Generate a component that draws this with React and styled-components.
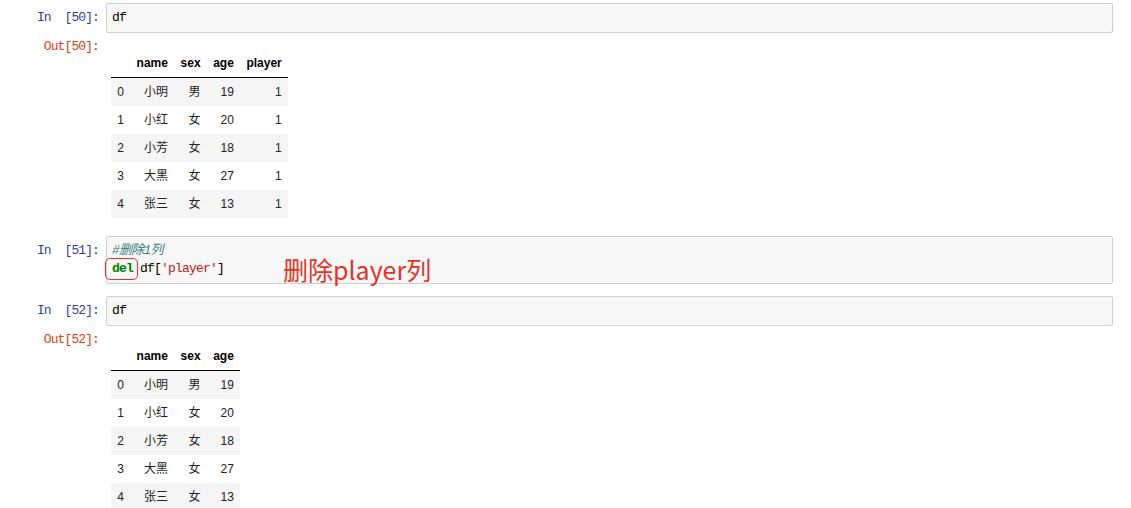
import styled, { createGlobalStyle } from "styled-components";

const GlobalStyle = createGlobalStyle`
  body {
    margin: 0;
    background: #ffffff;
  }
`;

const colors = {
  inPrompt: "#303f9f",
  outPrompt: "#d84315",
  border: "#cfcfcf",
  inputBg: "#f7f7f7",
  comment: "#408080",
  keyword: "#008000",
  string: "#ba2121",
  stripe: "#f5f5f5",
  note: "#e5332a",
};

const mono = `"Liberation Mono", "DejaVu Sans Mono", "Noto Sans CJK SC", monospace`;
const sans = `"Liberation Sans", "Noto Sans CJK SC", sans-serif`;

const Notebook = styled.div`
  margin-top: -3px;
  padding-right: 18px;
`;

const Cell = styled.div`
  position: relative;
  padding: 6px 0;
`;

const Row = styled.div`
  display: grid;
  grid-template-columns: 106px 1fr;
`;

const Prompt = styled.div`
  font-family: ${mono};
  font-size: 13px;
  letter-spacing: -0.9px;
  line-height: 18px;
  text-align: right;
  padding-right: 7px;
  padding-top: ${(p) => (p.out ? "0" : "6px")};
  color: ${(p) => (p.out ? colors.outPrompt : colors.inPrompt)};
  white-space: pre;
`;

const InputBox = styled.div`
  background: ${colors.inputBg};
  border: 1px solid ${colors.border};
  border-radius: 2px;
  padding: 5px 5px;
  font-family: ${mono};
  font-size: 13px;
  letter-spacing: -0.8px;
  line-height: 18px;
  color: #000;
  white-space: pre;
`;

const CodeLine = styled.div`
  height: 18px;
`;

const Comment = styled.span`
  color: ${colors.comment};
  font-style: italic;
`;

const Keyword = styled.span`
  position: relative;
  color: ${colors.keyword};
  font-weight: bold;
  &::after {
    content: "";
    position: absolute;
    left: -7px;
    right: -5px;
    top: -3px;
    bottom: -4px;
    border: 1.5px solid ${colors.note};
    border-radius: 5px;
  }
`;

const Str = styled.span`
  color: ${colors.string};
`;

const Note = styled.div`
  position: absolute;
  left: 283px;
  top: 24px;
  font-family: "Noto Sans CJK SC", "Liberation Sans", sans-serif;
  font-size: 25px;
  line-height: 30px;
  color: ${colors.note};
  white-space: nowrap;
`;

const Output = styled.div`
  margin-top: 5px;
  padding-bottom: 6px;
`;

const OutputBody = styled.div`
  padding: 11px 0 0 5px;
`;

const Table = styled.table`
  border-collapse: collapse;
  font-family: ${sans};
  font-size: 12px;
  color: #222;
  th,
  td {
    padding: 6px 6.3px;
    line-height: 16px;
    text-align: right;
    white-space: nowrap;
  }
  thead th {
    font-weight: bold;
    color: #000;
    border-bottom: 1px solid #000;
  }
  tbody th {
    font-weight: normal;
  }
  tbody tr:nth-child(odd) {
    background: ${colors.stripe};
  }
`;

const people = [
  ["小明", "男", 19],
  ["小红", "女", 20],
  ["小芳", "女", 18],
  ["大黑", "女", 27],
  ["张三", "女", 13],
];

function Frame({ withPlayer }) {
  return (
    <Table>
      <thead>
        <tr>
          <th></th>
          <th>name</th>
          <th>sex</th>
          <th>age</th>
          {withPlayer && <th>player</th>}
        </tr>
      </thead>
      <tbody>
        {people.map((p, i) => (
          <tr key={i}>
            <th>{i}</th>
            <td>{p[0]}</td>
            <td>{p[1]}</td>
            <td>{p[2]}</td>
            {withPlayer && <td>1</td>}
          </tr>
        ))}
      </tbody>
    </Table>
  );
}

function OutCell({ n, withPlayer }) {
  return (
    <Output>
      <Row>
        <Prompt out>{`Out[${n}]:`}</Prompt>
        <OutputBody>
          <Frame withPlayer={withPlayer} />
        </OutputBody>
      </Row>
    </Output>
  );
}

export default function App() {
  return (
    <>
      <GlobalStyle />
      <Notebook>
        <Cell>
          <Row>
            <Prompt>{"In  [50]:"}</Prompt>
            <InputBox>df</InputBox>
          </Row>
          <OutCell n={50} withPlayer />
        </Cell>
        <Cell>
          <Row>
            <Prompt>{"In  [51]:"}</Prompt>
            <InputBox>
              <CodeLine>
                <Comment>#删除1列</Comment>
              </CodeLine>
              <CodeLine>
                <Keyword>del</Keyword> df[<Str>'player'</Str>]
              </CodeLine>
            </InputBox>
          </Row>
          <Note>删除player列</Note>
        </Cell>
        <Cell>
          <Row>
            <Prompt>{"In  [52]:"}</Prompt>
            <InputBox>df</InputBox>
          </Row>
          <OutCell n={52} />
        </Cell>
      </Notebook>
    </>
  );
}
